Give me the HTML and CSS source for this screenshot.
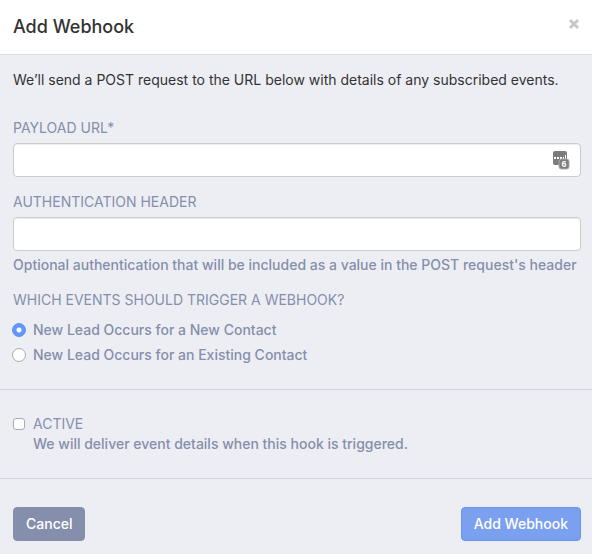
FILE: index.html
```html
<!DOCTYPE html>
<html lang="en">
<head>
<meta charset="utf-8">
<meta name="viewport" content="width=device-width, initial-scale=1">
<title>Add Webhook</title>
<link rel="stylesheet" href="styles.css">
</head>
<body>
<main class="modal">
  <header class="modal-header">
    <h1 class="title">Add Webhook</h1>
    <button type="button" class="close" aria-label="Close">
      <svg width="12" height="12" viewBox="0 0 12 12" aria-hidden="true"><path d="M2 2 10 10M10 2 2 10"/></svg>
    </button>
  </header>
  <form class="form">
    <div class="section fields">
      <p class="intro">We’ll send a POST request to the URL below with details of any subscribed events.</p>
      <div class="field">
        <label class="label" for="payload">PAYLOAD URL*</label>
        <div class="input-wrap">
          <input class="input" id="payload" type="text">
          <svg class="manager" width="18" height="20" viewBox="0 0 18 20" aria-hidden="true">
            <rect class="tile" x="1" y="1" width="14" height="14" rx="2"/>
            <path class="dots" d="M2 7h2v2H2zM5 7h2v2H5zM8 7h2v2H8zM11 7h1v2h-1zM13 5h1v4h-1z"/>
            <rect class="badge" x="7" y="9" width="10" height="10" rx="2.5"/>
            <text class="count" x="12" y="17" text-anchor="middle">6</text>
          </svg>
        </div>
      </div>
      <div class="field">
        <label class="label" for="auth">AUTHENTICATION HEADER</label>
        <input class="input" id="auth" type="text" aria-describedby="auth-help">
        <p class="help" id="auth-help">Optional authentication that will be included as a value in the POST request's header</p>
      </div>
      <fieldset class="events">
        <legend class="label">WHICH EVENTS SHOULD TRIGGER A WEBHOOK?</legend>
        <label class="choice"><input class="radio" type="radio" name="event" checked>New Lead Occurs for a New Contact</label>
        <label class="choice"><input class="radio" type="radio" name="event">New Lead Occurs for an Existing Contact</label>
      </fieldset>
    </div>
    <div class="section active">
      <label class="choice caps"><input class="checkbox" type="checkbox" aria-describedby="active-help">ACTIVE</label>
      <p class="active-help" id="active-help">We will deliver event details when this hook is triggered.</p>
    </div>
    <footer class="actions">
      <button type="button" class="button cancel">Cancel</button>
      <button type="submit" class="button submit">Add Webhook</button>
    </footer>
  </form>
</main>
</body>
</html>
```
FILE: styles.css
```css
* { box-sizing: border-box; }

body {
  margin: 0;
  background: #edeef4;
  color: #333;
  font: 14px/20px Inter, "Liberation Sans", sans-serif;
}

h1, p, fieldset, legend { margin: 0; padding: 0; border: 0; }

.modal-header {
  display: flex;
  align-items: flex-start;
  justify-content: space-between;
  padding: 14px 12px 15px 13px;
  background: #fff;
  border-bottom: 1px solid #dedfe3;
}

.title { font-size: 18px; line-height: 25px; font-weight: 500; }

.close {
  display: flex;
  padding: 4px 0;
  border: 0;
  background: none;
}

.close path { fill: none; stroke: #c8c8c8; stroke-width: 3; }

.section {
  padding: 24px 11px 24px 13px;
  border-bottom: 1px solid #d0d2e4;
}

.fields { padding-top: 15px; }
.intro { margin-bottom: 28px; }
.field { margin-bottom: 15px; }

.label {
  display: block;
  margin-bottom: 5px;
  color: #858fab;
}

.input-wrap { position: relative; }

.input {
  display: block;
  width: 100%;
  height: 34px;
  padding: 6px 12px;
  border: 1px solid #ccc;
  border-radius: 4px;
  background: #fff;
  box-shadow: inset 0 1px 1px rgba(0, 0, 0, 0.075);
  font: inherit;
}

.manager { position: absolute; top: 7px; right: 11px; }
.tile { fill: #7c7c7c; }
.dots { fill: #fff; }
.badge { fill: #7c7c7c; stroke: #aaa; stroke-width: 1; }
.count { fill: #fff; font: bold 9px "Liberation Sans", sans-serif; }

.help, .choice, .active-help { color: #858fab; font-weight: 500; }
.help { margin-top: 4px; }

.events .label { margin-bottom: 10px; }

.choice { display: flex; align-items: center; gap: 7px; }
.choice + .choice { margin-top: 5px; }
.caps { font-weight: 400; }

.radio, .checkbox {
  flex: none;
  appearance: none;
  margin: 0;
  border: 1px solid #aaa;
  background: #fff;
}

.radio { width: 14px; height: 14px; margin-left: -1px; border-radius: 50%; }

.radio:checked {
  border-color: #5c8ef8;
  background: radial-gradient(circle, #fff 2px, #6395fb 3px);
}

.checkbox { width: 12px; height: 12px; margin-right: 1px; border-radius: 3px; }

.active-help { padding-left: 20px; }

.actions {
  display: flex;
  justify-content: space-between;
  padding: 28px 11px 13px 13px;
}

.button {
  height: 34px;
  padding: 6px 12px;
  border: 1px solid #858fab;
  border-radius: 4px;
  background: #858fab;
  color: #fff;
  font: inherit;
  font-weight: 500;
}

.submit { border-color: #6a93ed; background: #7ba0ef; }
```
